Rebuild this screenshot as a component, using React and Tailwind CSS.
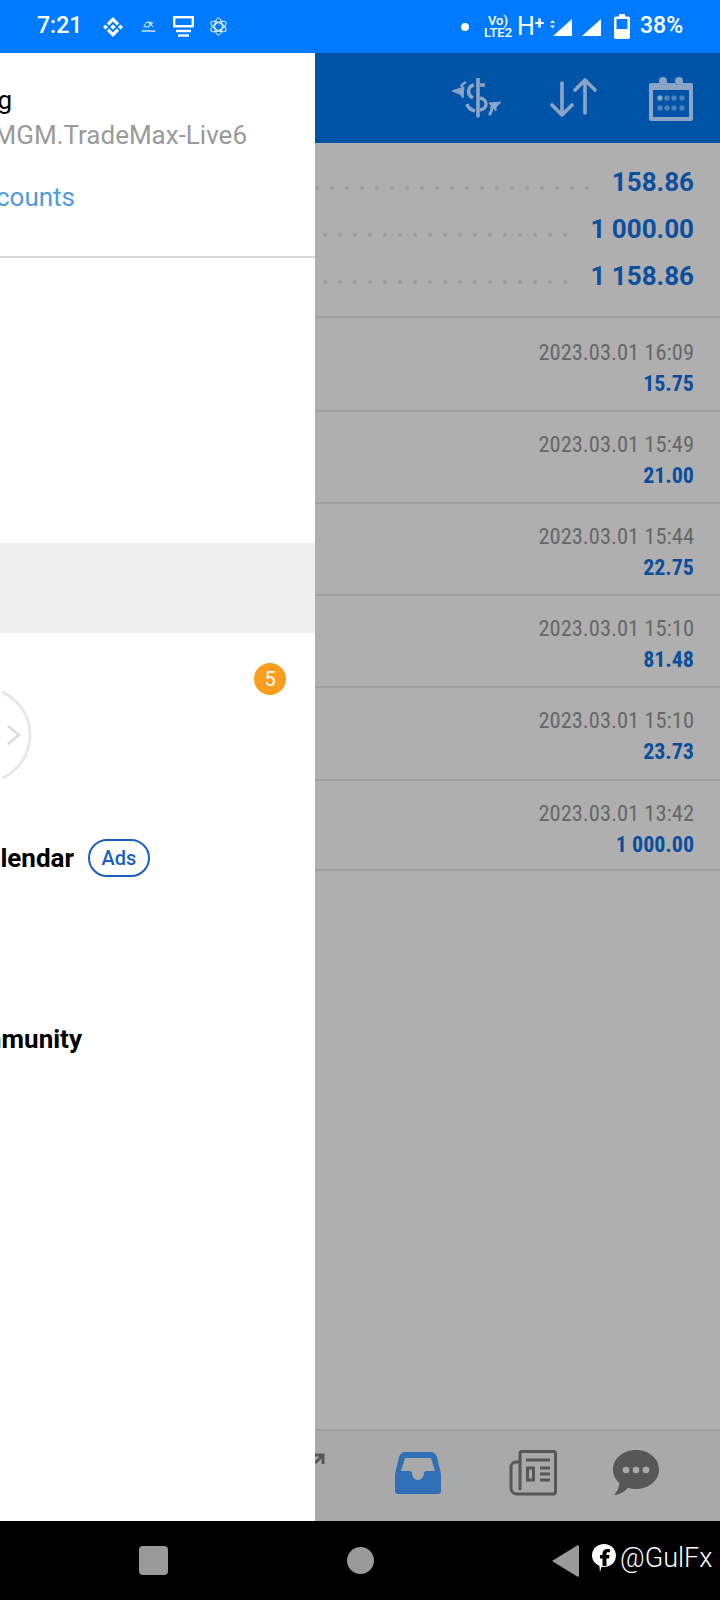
import React from "react";

const rows = [
  { date: "2023.03.01 16:09", amount: "15.75", box: "h-[94px] pt-[19px]" },
  { date: "2023.03.01 15:49", amount: "21.00", box: "h-[92px] pt-[17px]" },
  { date: "2023.03.01 15:44", amount: "22.75", box: "h-[92px] pt-[17px]" },
  { date: "2023.03.01 15:10", amount: "81.48", box: "h-[92px] pt-[17px]" },
  { date: "2023.03.01 15:10", amount: "23.73", box: "h-[93px] pt-[17px]" },
  { date: "2023.03.01 13:42", amount: "1 000.00", box: "h-[90px] pt-[17px]" },
];

const balances = [
  { value: "158.86", dots: 19 },
  { value: "1 000.00", dots: 17 },
  { value: "1 158.86", dots: 18 },
];

const Binance = () => (
  <svg width="22" height="22" viewBox="0 0 22 22" fill="white">
    <path d="M11 1l6.200 6.200-2.300 2.300L11 5.600 7.100 9.500 4.800 7.200zM11 21l-6.200-6.200 2.300-2.300 3.900 3.900 3.900-3.900 2.300 2.300zM1 11l2.500-2.500L6 11l-2.500 2.500zM16 11l2.500-2.500L21 11l-2.500 2.500zM11 8.300l2.700 2.700-2.700 2.700L8.300 11z" />
  </svg>
);

const Exness = () => (
  <svg width="17" height="13" viewBox="0 0 18 13" fill="none" stroke="white">
    <path d="M4 7l3-5h5M5 7h4l3-5M9 2l5 5M14 2l-5 5" strokeWidth="1" />
    <text x="9" y="12.500" textAnchor="middle" fontSize="4.500" fill="white" stroke="none" fontFamily="Roboto, sans-serif" fontWeight="700">exness</text>
  </svg>
);

const Monitor = () => (
  <svg width="21" height="22" viewBox="0 0 21 22" fill="none" stroke="white">
    <rect x="1.200" y="1.200" width="18.600" height="9" strokeWidth="2.400" />
    <path d="M3 15h15" strokeWidth="2.400" />
    <path d="M5 19.500h11" strokeWidth="2.400" />
  </svg>
);

const Atom = () => (
  <svg width="17" height="19" viewBox="0 0 18 20" fill="none" stroke="white" strokeWidth="1">
    <ellipse cx="9" cy="10" rx="4" ry="9" />
    <ellipse cx="9" cy="10" rx="4" ry="9" transform="rotate(60 9 10)" />
    <ellipse cx="9" cy="10" rx="4" ry="9" transform="rotate(-60 9 10)" />
  </svg>
);

const Signal = ({ arrows }) => (
  <svg width="22" height="20" viewBox="0 0 22 20" fill="white">
    <path d="M22 2v17H3z" />
    {arrows && <path d="M0 6l2.500-2.800L5 6zM0 8.500h5l-2.500 2.800z" />}
  </svg>
);

const Battery = () => (
  <svg width="16" height="25" viewBox="0 0 16 25" fill="white">
    <path d="M5 0h6v2.500h3a2 2 0 0 1 2 2V23a2 2 0 0 1-2 2H2a2 2 0 0 1-2-2V4.500a2 2 0 0 1 2-2h3z" />
    <rect x="2.500" y="5" width="11" height="10" fill="#007bff" />
  </svg>
);

const DollarSwap = () => (
  <svg width="50" height="40" viewBox="0 0 50 40" fill="none" stroke="#8ba5c6">
    <path d="M27 1v37" strokeWidth="3.600" strokeLinecap="round" />
    <path d="M23 7C17 8 15 16 22 20" strokeWidth="3.500" />
    <path d="M29 7h5" strokeWidth="3.500" />
    <path d="M29 20c8 1 8 11 0 12" strokeWidth="3.500" />
    <path d="M24 33c-4-1-7-3-8-7" strokeWidth="3.500" />
    <path d="M15 4c-2 1-4 2-5 5" strokeWidth="2.500" />
    <path d="M1 13l12-4-1 11-3-4z" fill="#8ba5c6" strokeWidth="1" />
    <path d="M38 37c2-2 3-5 3-9" strokeWidth="3" />
    <path d="M50 24l-12 1 7 8 0-4z" fill="#8ba5c6" strokeWidth="1" />
  </svg>
);

const SortArrows = () => (
  <svg width="47" height="40" viewBox="0 0 47 40" fill="none" stroke="#8ba5c6" strokeWidth="3.600" strokeLinecap="round" strokeLinejoin="round">
    <path d="M12 5v32M2 27l10 10 10-10" />
    <path d="M35 35V2M25 12L35 2l10 10" />
  </svg>
);

const CalendarIcon = () => (
  <svg width="44" height="45" viewBox="0 0 44 45" fill="#8ba5c6">
    <circle cx="14" cy="5" r="4" />
    <circle cx="30" cy="5" r="4" />
    <path d="M2 7h8.500a4 4 0 0 0 7 0h8.500a4 4 0 0 0 7 0H42a2 2 0 0 1 2 2v34a2 2 0 0 1-2 2H2a2 2 0 0 1-2-2V9a2 2 0 0 1 2-2z" />
    <rect x="4" y="14" width="36" height="27" fill="#0054a8" />
    {[11, 18, 25, 33].map((x) =>
      [22, 32].map((y) => <circle key={x + "-" + y} cx={x} cy={y} r="2.700" opacity={x === 11 && y === 22 ? 1 : 0.55} />)
    )}
  </svg>
);

const InboxIcon = () => (
  <svg width="46" height="42" viewBox="0 0 46 42" fill="#2f6fb5">
    <path fillRule="evenodd" d="M10 0h26c3 0 5 2 6 5l4 17v17a3 3 0 0 1-3 3H3a3 3 0 0 1-3-3V22L4 5c1-3 3-5 6-5zM10 6L6 19h9c1 0 2 1 2 2 0 4 3 7 6 7s6-3 6-7c0-1 1-2 2-2h9L36 6z" />
  </svg>
);

const NewsIcon = () => (
  <svg width="48" height="46" viewBox="0 0 48 46" fill="none" stroke="#575757" strokeWidth="3">
    <path d="M11 12H7a5 5 0 0 0-5 5v21c0 4 3 6 6 6h37a2 2 0 0 0 1.500-1.500V3a2 2 0 0 0-1.500-1.500H12a1.500 1.500 0 0 0-1 1.500v37" strokeLinejoin="round" />
    <path d="M17 10h24" strokeWidth="3" />
    <rect x="18.500" y="18" width="6" height="12" strokeWidth="3" />
    <path d="M31 18h10M31 24h10M31 30h10" strokeWidth="3" />
  </svg>
);

const ChatIcon = () => (
  <svg width="46" height="46" viewBox="0 0 46 46" fill="#575757">
    <path d="M23 0c12.700 0 23 8.500 23 19.500S35.700 39 23 39c-3 0-5.500-.4-8-1.200C11 42 6 45 1 45c3-3 5-7 5.500-12C2.500 29.500 0 25 0 19.500 0 8.500 10.300 0 23 0z" />
    <circle cx="13" cy="20" r="3.300" fill="#a9a9a9" />
    <circle cx="23" cy="20" r="3.300" fill="#a9a9a9" />
    <circle cx="33" cy="20" r="3.300" fill="#a9a9a9" />
  </svg>
);

const ChartArrow = () => (
  <svg width="12" height="12" viewBox="0 0 12 12" fill="none" stroke="#575757" strokeWidth="3">
    <path d="M0 2h10v9M10 2L2 10" />
  </svg>
);

const FbBubble = () => (
  <svg width="24" height="28" viewBox="0 0 24 28" fill="white">
    <path fillRule="evenodd" d="M12 0c7 0 12 5 12 11.500S19 23 12 23c-1 0-1.800-.1-2.500-.3L8 28l-.6-6.200C3 20 0 16 0 11.500 0 5 5 0 12 0zM15.500 5c-3 0-5 1.500-5 4.500V11H8v3.500h2.500V22h4v-7.500H17l.5-3.500h-3V9.500c0-1 .5-1.200 1.500-1.200h2V5.300C17 5.100 16.200 5 15.500 5z" />
  </svg>
);

export default function App() {
  return (
    <div className="w-[720px] h-[1600px] flex flex-col overflow-hidden font-['Roboto',sans-serif] bg-[#afafaf]">
      {/* Status bar */}
      <div className="h-[53px] shrink-0 bg-[#007bff] flex items-center text-white">
        <span className="ml-[37px] w-[65px] text-[23px] font-medium">7:21</span>
        <div className="flex items-center gap-[16px] w-[359px]">
          <Binance />
          <Exness />
          <Monitor />
          <Atom />
        </div>
        <div className="flex items-center">
          <span className="size-[8px] rounded-full bg-white" />
          <div className="ml-[15px] w-[28px] flex flex-col items-center text-[13px] leading-[12px] font-medium">
            <span>Vo)</span>
            <span>LTE2</span>
          </div>
          <span className="ml-[5px] w-[30px] text-[25px] leading-none">H<sup className="text-[17px] font-bold -top-[6px]">+</sup></span>
          <div className="ml-[3px] flex items-center gap-[7px]">
            <Signal arrows />
            <Signal />
          </div>
          <div className="ml-[13px]">
            <Battery />
          </div>
          <span className="ml-[10px] text-[23px] font-medium">38%</span>
        </div>
      </div>

      <div className="flex-1 flex min-h-0">
        {/* Drawer */}
        <div className="w-[315px] shrink-0 bg-white overflow-hidden flex flex-col">
          <div className="h-[205px] shrink-0 border-b-2 border-[#d8d8d8] flex flex-col items-end">
            <div className="w-[12px] mt-[32px] flex justify-end text-[26px] leading-[30px] text-black whitespace-nowrap self-start">Trading</div>
            <div className="w-[247px] mt-[5px] flex justify-end text-[26px] leading-[30px] text-[#9a9a9a] whitespace-nowrap self-start">Demo - MGM.TradeMax-Live6</div>
            <div className="w-[75px] mt-[32px] flex justify-end text-[26px] leading-[30px] text-[#4f9be0] whitespace-nowrap self-start">Manage accounts</div>
          </div>
          <div className="h-[285px] shrink-0" />
          <div className="h-[90px] shrink-0 bg-[#efefef]" />
          <div className="relative h-[178px] shrink-0">
            <svg width="40" height="96" viewBox="0 0 40 96" fill="none" className="ml-[2px] mt-[54px]">
              <circle cx="-19" cy="48" r="47" stroke="#e8e8e8" strokeWidth="3" />
              <path d="M6 39l11 9-11 9" stroke="#dcdcdc" strokeWidth="2.500" />
            </svg>
            <span className="absolute left-[254px] top-[30px] size-[32px] rounded-full bg-[#fb9d1f] text-white text-[20px] flex items-center justify-center">5</span>
          </div>
          <div className="flex items-center h-[38px] mt-[28px] shrink-0">
            <div className="w-[74px] flex justify-end text-[26px] font-bold text-black whitespace-nowrap">Economic Calendar</div>
            <span className="ml-[14px] w-[62px] h-[38px] rounded-full border-2 border-[#1a5fbf] text-[#1a5fbf] text-[20px] font-medium flex items-center justify-center">Ads</span>
          </div>
          <div className="w-[82px] mt-[143px] flex justify-end text-[26px] leading-[38px] font-bold text-black whitespace-nowrap">Traders Community</div>
        </div>

        {/* Page behind the drawer */}
        <div className="flex-1 min-w-0 flex flex-col">
          <div className="h-[90px] shrink-0 bg-[#0054a8] flex items-center justify-end pr-[27px]">
            <DollarSwap />
            <div className="ml-[49px]">
              <SortArrows />
            </div>
            <div className="ml-[52px]">
              <CalendarIcon />
            </div>
          </div>

          <div className="h-[175px] shrink-0 border-b-2 border-[#9e9e9e] pt-[24px] pr-[26px] flex flex-col gap-[17px]">
            {balances.map((b) => (
              <div key={b.value} className="h-[30px] flex items-end justify-end overflow-hidden">
                <div className="flex gap-[11px] pb-[7px] mr-[23px]">
                  {Array.from({ length: b.dots }).map((_, i) => (
                    <span key={i} className="size-[4px] shrink-0 rounded-full bg-[#9c9c9c]" />
                  ))}
                </div>
                <span className="text-[26px] leading-[30px] font-bold text-[#0a4f9e] whitespace-nowrap shrink-0">{b.value}</span>
              </div>
            ))}
          </div>

          {rows.map((r, i) => (
            <div key={i} className={`${r.box} shrink-0 border-b-2 border-[#9e9e9e] pr-[26px] flex flex-col items-end`}>
              <span className="text-[22.5px] leading-[30px] text-[#676767] font-['Liberation_Sans_Narrow','Roboto_Condensed','Roboto',sans-serif]">{r.date}</span>
              <span className="mt-[2px] text-[22px] leading-[30px] font-bold text-[#0a4f9e] font-['Liberation_Sans_Narrow','Roboto_Condensed','Roboto',sans-serif]">{r.amount}</span>
            </div>
          ))}

          <div className="flex-1" />

          {/* Bottom tabs */}
          <div className="h-[92px] shrink-0 border-t-2 border-[#9e9e9e] flex items-start bg-[#a9a9a9] overflow-hidden">
            <div className="-ml-[2px] mt-[22px]">
              <ChartArrow />
            </div>
            <div className="ml-[70px] mt-[21px]">
              <InboxIcon />
            </div>
            <div className="ml-[68px] mt-[19px]">
              <NewsIcon />
            </div>
            <div className="ml-[56px] mt-[19px]">
              <ChatIcon />
            </div>
          </div>
        </div>
      </div>

      {/* Nav bar */}
      <div className="h-[79px] shrink-0 bg-black flex items-start text-white">
        <span className="ml-[139px] mt-[25px] size-[29px] rounded-[4px] bg-[#9a9a9a]" />
        <span className="ml-[179px] mt-[26px] size-[27px] rounded-full bg-[#9a9a9a]" />
        <svg width="28" height="32" viewBox="0 0 28 32" fill="#9a9a9a" className="ml-[178px] mt-[24px]">
          <path d="M0 16L26 0a2 2 0 0 1 1 2v28a2 2 0 0 1-1 2z" />
        </svg>
        <div className="ml-[12px] mt-[23px]">
          <FbBubble />
        </div>
        <span className="ml-[4px] mt-[19px] text-[27px] leading-[36px] font-light whitespace-nowrap">@GulFx</span>
      </div>
    </div>
  );
}
